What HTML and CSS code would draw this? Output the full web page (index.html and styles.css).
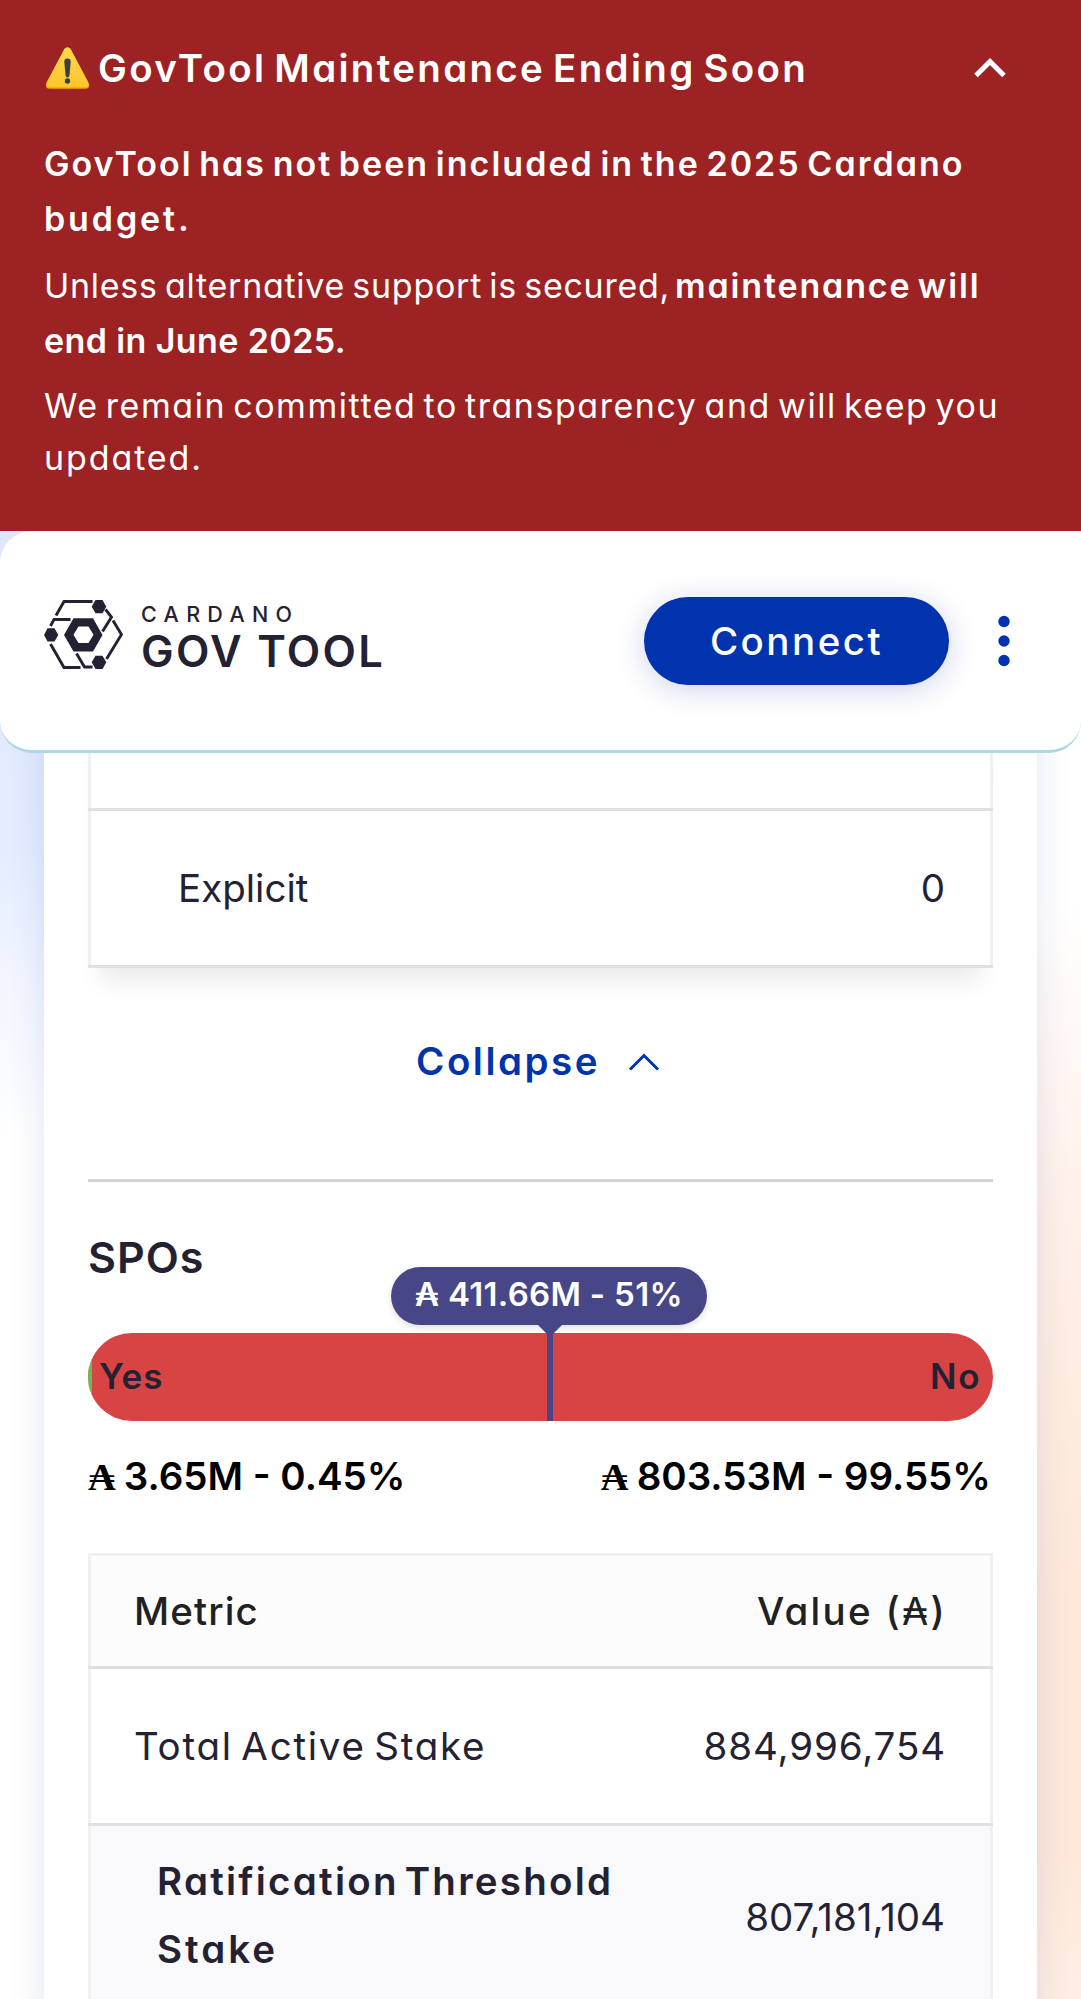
FILE: index.html
```html
<!DOCTYPE html>
<html lang="en">
<head>
<meta charset="utf-8">
<title>Cardano GovTool</title>
<link rel="stylesheet" href="styles.css">
</head>
<body>
<div class="page">
  <section class="banner">
    <div class="banner-head">
      <svg class="warn" viewBox="0 0 44 42"><defs><linearGradient id="w" x1="0" y1="0" x2="0" y2="1"><stop offset="0" stop-color="#ffd94a"/><stop offset="1" stop-color="#fdc62c"/></linearGradient></defs><path d="M19 2.2Q22-1.3 25 2.2L43 36Q45 41.5 40 41.8H4Q-1 41.5 1 36Z" fill="#f2a600"/><path d="M19 1.8Q22-1.5 25 1.8L42.6 35Q44.4 40 39.600 40.300H4.400Q-.4 40 1.400 35Z" fill="url(#w)"/><path d="M22 11.500c-2.600 0-3.300 1.700-3.200 3.500l1.200 13c.2 3.200 3.800 3.200 4 0l1.200-13c.1-1.800-.6-3.500-3.200-3.500z" fill="#3a3f41"/><circle cx="22" cy="34" r="2.700" fill="#3a3f41"/></svg>
      <h1 class="title">GovTool Maintenance Ending Soon</h1>
      <svg class="chev" viewBox="0 0 34 22"><path d="M3 18.500 17 4.500 31 18.500" fill="none" stroke="#fff" stroke-width="5"/></svg>
    </div>
    <p class="strong"><span class="budget-line">GovTool has not been included in the 2025 Cardano</span><br><span class="budget-end">budget.</span></p>
    <p><span class="unless">Unless alternative support is secured,</span><b class="maintenance">maintenance will</b><br><b class="june">end in June 2025.</b></p>
    <p class="last"><span class="remain">We remain committed to transparency and will keep you</span><br><span class="updated">updated.</span></p>
  </section>

  <header class="nav">
    <div class="logo">
      <svg class="mark" viewBox="0 0 79 69" fill="none" stroke="#242232" stroke-width="2.900">
        <path d="M12 15.500 20 1.500H48.500M6.500 26 10 19.500H26.500M61.500 9.500 67.500 17 58.500 31.500M69 20.500 77.500 34.500 62.500 59M6.500 44 20 67.500H36.500M32.500 53.500 40.500 67H48.500"/>
        <g fill="#242232" stroke="none"><path d="M51.500 0H58.500L62.300 6.700 58.500 13.300H51.500L47.700 6.700ZM51.500 55.700H58.500L62.300 62.300 58.500 69H51.500L47.700 62.300ZM3.500 28.300H10.500L14.300 35 10.500 41.500H3.500L0 35Z"/><path fill-rule="evenodd" d="M29.500 18.300H49L58.500 35 49 51.500H29.500L20 35ZM34.500 26.500 29.500 34.700 34.500 43H44.500L49.500 34.700 44.500 26.500Z"/></g>
      </svg>
      <div class="words"><span class="word-top">CARDANO</span><span class="word-main">GOV TOOL</span></div>
    </div>
    <div class="actions">
      <button class="connect">Connect</button>
      <svg class="dots" viewBox="0 0 12 52" fill="#0033ad"><circle cx="6" cy="6.500" r="5.700"/><circle cx="6" cy="26" r="5.700"/><circle cx="6" cy="45.500" r="5.700"/></svg>
    </div>
  </header>

  <main class="card">
    <div class="table upper">
      <div class="row stub"></div>
      <div class="row sub"><span>Explicit</span><span>0</span></div>
    </div>
    <button class="collapse"><span>Collapse</span><svg viewBox="0 0 32 20"><path d="M2 17.500 16 3.500 30 17.500" fill="none" stroke="#0033ad" stroke-width="3"/></svg></button>
    <hr class="divider">
    <h2 class="group">SPOs</h2>
    <div class="votes">
      <div class="bar"><i class="yes-fill"></i><span class="yes">Yes</span><span class="no">No</span></div>
      <div class="mark-line"></div>
      <div class="tip">₳ 411.66M - 51%</div>
    </div>
    <div class="totals"><span><i class="ada">₳</i>3.65M - 0.45%</span><span><i class="ada">₳</i>803.53M - 99.55%</span></div>
    <div class="table lower">
      <div class="row head"><span class="metric">Metric</span><span class="value-head">Value (<span class="thin">₳</span>)</span></div>
      <div class="row"><span class="total-label">Total Active Stake</span><span class="total-value">884,996,754</span></div>
      <div class="row threshold"><b><span class="ratification">Ratification Threshold</span><br><span class="stake">Stake</span></b><span class="threshold-value">807,181,104</span></div>
    </div>
  </main>
</div>
</body>
</html>
```
FILE: styles.css
```css
*{box-sizing:border-box}
body{margin:0;font-family:Inter,"Liberation Sans",sans-serif;font-feature-settings:"cv11";color:#242232;font-size:38.500px}
.page{height:1999px;overflow:hidden;position:relative;background:linear-gradient(180deg,#dfe6ff 530px,#e3ecff 840px,#f2f6ff 990px,#fff 1140px) left/44px 100% no-repeat,linear-gradient(180deg,#fff 900px,#fff0e8 1220px,#fee8da 1600px,#fee8da 1850px,#ffeee5 1999px) right/44px 100% no-repeat,#fff}

.banner{height:530.500px;background:#9c2223;color:#fff;padding:40px 44px 0;font-size:34px}
.banner-head{display:flex;align-items:center;height:56px;margin-bottom:40px;padding-right:30px}
.warn{width:45px;height:42px;margin-left:1px}
.title{margin:0 0 0 8px;font-size:38.500px;font-weight:600;flex:1;white-space:nowrap;letter-spacing:2.300px;word-spacing:-4px}
.chev{width:34px;height:22px}
p{margin:0 0 12px;line-height:55px;white-space:nowrap}
.last{line-height:52px}
b,.strong{font-weight:600}
.budget-line{letter-spacing:2.030px;word-spacing:-4px}
.budget-end{letter-spacing:2.900px}
.unless{letter-spacing:.730px;word-spacing:-3px}
.maintenance{margin-left:5px;letter-spacing:1.850px;word-spacing:-4px}
.june{letter-spacing:.400px}
.remain{letter-spacing:1.550px;word-spacing:-4px}
.updated{letter-spacing:1.900px}

.nav{position:relative;height:222.500px;background:#fff;border-bottom:3px solid #add8e6;border-radius:32px;display:flex;justify-content:space-between;padding:66px 71px 0 44px}
.logo{display:flex;gap:18px;height:72px;padding-top:3px}
.mark{width:79px;height:69px}
.words{display:flex;flex-direction:column;white-space:nowrap}
.word-top{font-size:21.500px;line-height:24px;margin-top:2px;font-weight:500;letter-spacing:7.300px}
.word-main{font-size:43.500px;font-weight:600;line-height:44px;margin-top:3px;letter-spacing:2.300px}
.actions{display:flex;align-items:center;height:88px;gap:49px}
button{font:inherit;border:0;background:none;padding:0}
.connect{width:305px;height:88px;border-radius:44px;background:#0033ad;color:#fff;font-weight:500;letter-spacing:2.500px;box-shadow:0 5px 30px rgba(20,40,160,.2)}
.dots{width:12px;height:52px}

.card{margin:-30px 44px 0;height:1300px;background:#fff;padding:0 44px;box-shadow:0 0 34px rgba(0,40,150,.11)}
.row{display:flex;align-items:center;justify-content:space-between;border-bottom:3px solid #e0e0e0;box-shadow:inset 3px 0 #f0f0f0,inset -3px 0 #f0f0f0;height:157px;padding:0 48px 0 46px;white-space:nowrap}
.stub{height:88px}
.upper{box-shadow:0 26px 22px -12px rgba(0,0,0,.08)}
.row.sub{padding-left:90px}
.upper .row{background:#fff}
.collapse{display:flex;width:100%;height:60px;margin-top:63px;padding-right:5px;align-items:center;justify-content:center;gap:28px;color:#0033ad;font-weight:600;letter-spacing:2.500px}
.collapse svg{width:32px;height:20px;margin-top:2px}
.divider{height:3px;border:0;background:#d3d3d3;margin:88px 0 0}
.group{font-size:43px;font-weight:600;line-height:60px;margin:45px 0 0;height:106px;letter-spacing:1px}

.votes{position:relative;height:88px;font-size:33px;font-weight:600}
.bar{display:flex;height:88px;border-radius:44px;overflow:hidden;background:#d84444;align-items:center;padding:0 12px 2px 0}
.yes{font-size:35px;letter-spacing:1px}
.no{font-size:35px;margin-left:auto;letter-spacing:1.500px}
.yes-fill{width:4px;height:90px;background:#65bd50;margin-right:7px}
.mark-line{position:absolute;left:459px;top:0;width:6px;height:88px;background:#474788}
.tip{position:absolute;left:303px;top:-66px;width:316px;height:58px;border-radius:29px;background:#474788;color:#fff;line-height:54px;text-align:center;letter-spacing:.300px;white-space:nowrap;box-shadow:0 3px 6px rgba(0,0,0,.12)}
.tip:after{content:"";position:absolute;left:146px;top:57px;border:13px solid transparent;border-top-color:#474788;border-bottom:0}
.totals{display:flex;justify-content:space-between;margin-top:25px;height:60px;line-height:60px;color:#000;font-weight:600;padding-right:2px;white-space:nowrap}
.ada{font:bold 38.500px "Liberation Serif",serif;margin-right:8px}

.lower{margin-top:46.500px}
.head{height:116px;background:#fcfcfc;border-top:3px solid #f0f0f0;font-weight:500;color:#212121}
.metric{letter-spacing:1.100px}
.value-head{letter-spacing:2.300px;margin-right:-2px}
.thin{font-weight:400;font-size:38px}
.total-label{letter-spacing:1.750px;word-spacing:-4px}
.total-value{letter-spacing:.900px;margin-right:-1px}
.row.threshold{height:185px;background:#f9f9fb;padding-left:69px;line-height:68px}
.threshold b{padding-bottom:3px}
.ratification{letter-spacing:2.250px;word-spacing:-6px}
.stake{letter-spacing:3px}
```
